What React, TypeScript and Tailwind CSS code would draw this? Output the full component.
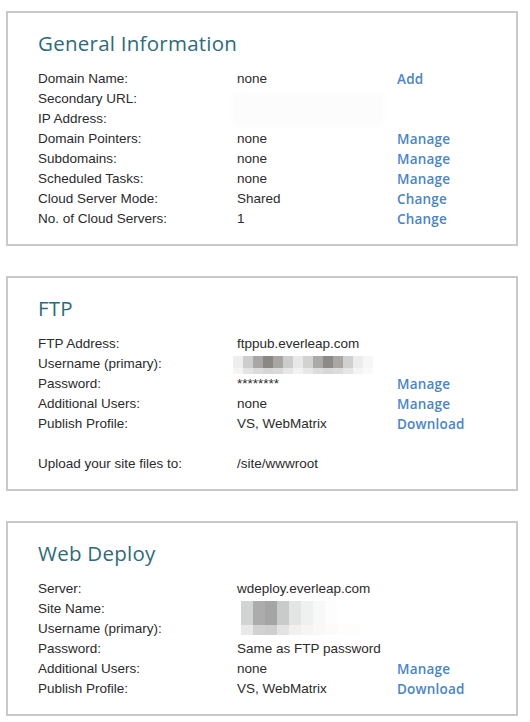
import React from "react";

type Row = {
  label: string;
  value?: string;
  link?: string;
  blank?: boolean;
  mosaic?: "ftp" | "deploy" | "faint";
};

const FtpCells = [
  "#eeeeee", "#cdcdcd", "#a9a7a5", "#8b8782", "#a8a5a2", "#cccccc", "#e8e8e8",
  "#d2d2d2", "#acaaa8", "#8d8986", "#a9a6a3", "#d0d0d0", "#ececec", "#f6f6f6",
];
const FtpCells2 = [
  "#f4f4f4", "#e4e4e4", "#dcdcdc", "#d6d6d6", "#dadada", "#e6e6e6", "#f2f2f2",
  "#e8e8e8", "#dddddd", "#d8d8d8", "#dcdcdc", "#e6e6e6", "#f4f4f4", "#fafafa",
];
const DeployTop = ["#d2d3d3", "#acacac", "#a5a5a5", "#c9caca", "#e3e5e5", "#eff1f1", "#f8f8f8", "#fdfdfd", "#ffffff", "#ffffff", "#ffffff"];
const DeployBottom = ["#e9e9e9", "#d2d2d2", "#cecece", "#e3e3e3", "#f2f0ee", "#f7f5f3", "#fbf9f8", "#fdfbfa", "#fefdfc", "#fefdfc", "#ffffff"];

// pixelated blur over the hidden account values
const Mosaic = ({ kind }: { kind: "ftp" | "deploy" | "faint" }) => {
  if (kind === "ftp") {
    return (
      <div className="absolute left-[-4px] top-[2px] flex flex-col">
        <div className="flex">
          {FtpCells.map((c, i) => (
            <div key={i} className="w-[10px] h-[12px]" style={{ background: c }} />
          ))}
        </div>
        <div className="flex">
          {FtpCells2.map((c, i) => (
            <div key={i} className="w-[10px] h-[6px]" style={{ background: c }} />
          ))}
        </div>
      </div>
    );
  }
  if (kind === "deploy") {
    return (
      <div className="absolute left-[4px] top-[2px] flex flex-col">
        <div className="flex">
          {DeployTop.map((c, i) => (
            <div key={i} className="w-[12px] h-[24px]" style={{ background: c }} />
          ))}
        </div>
        <div className="flex">
          {DeployBottom.map((c, i) => (
            <div key={i} className="w-[12px] h-[10px]" style={{ background: c }} />
          ))}
        </div>
      </div>
    );
  }
  return (
    <div className="absolute left-[-4px] top-[4px] w-[150px] h-[34px] bg-[#fcfcfc] blur-[2px]" />
  );
};

const Card = ({ title, rows }: { title: string; rows: Row[] }) => (
  <div className="border-2 border-[#c9c9c7] bg-white pt-[16px] pb-[15px] pl-[30px] pr-4">
    <h2 className="font-['Open_Sans',sans-serif] font-medium text-[20.5px] leading-[28px] text-[#2f6b79] tracking-[0.25px] mb-[12px]">
      {title}
    </h2>
    <div className="flex flex-col font-['Liberation_Sans',Arial,sans-serif] text-[13.5px] leading-[20px] text-[#2b2b2b]">
      {rows.map((r, i) =>
        r.blank ? (
          <div key={i} className="h-[20px]" />
        ) : (
          <div key={i} className="flex h-[20px] items-center">
            <div className="w-[199px] shrink-0">{r.label}</div>
            <div className="w-[160px] shrink-0 relative self-stretch flex items-center">
              {r.mosaic && <Mosaic kind={r.mosaic} />}
              <span className="relative">{r.value}</span>
            </div>
            {r.link && (
              <a className="font-['Open_Sans',sans-serif] font-semibold text-[13.5px] text-[#4a85c5] tracking-[0.2px] cursor-pointer">
                {r.link}
              </a>
            )}
          </div>
        )
      )}
    </div>
  </div>
);

export default function App() {
  return (
    <div className="w-[530px] min-h-[722px] bg-white pt-[11px] pl-[6px] pr-[12px] flex flex-col gap-[30px]">
      <Card
        title="General Information"
        rows={[
          { label: "Domain Name:", value: "none", link: "Add" },
          { label: "Secondary URL:", mosaic: "faint" },
          { label: "IP Address:" },
          { label: "Domain Pointers:", value: "none", link: "Manage" },
          { label: "Subdomains:", value: "none", link: "Manage" },
          { label: "Scheduled Tasks:", value: "none", link: "Manage" },
          { label: "Cloud Server Mode:", value: "Shared", link: "Change" },
          { label: "No. of Cloud Servers:", value: "1", link: "Change" },
        ]}
      />
      <Card
        title="FTP"
        rows={[
          { label: "FTP Address:", value: "ftppub.everleap.com" },
          { label: "Username (primary):", mosaic: "ftp" },
          { label: "Password:", value: "********", link: "Manage" },
          { label: "Additional Users:", value: "none", link: "Manage" },
          { label: "Publish Profile:", value: "VS, WebMatrix", link: "Download" },
          { label: "", blank: true },
          { label: "Upload your site files to:", value: "/site/wwwroot" },
        ]}
      />
      <Card
        title="Web Deploy"
        rows={[
          { label: "Server:", value: "wdeploy.everleap.com" },
          { label: "Site Name:", mosaic: "deploy" },
          { label: "Username (primary):" },
          { label: "Password:", value: "Same as FTP password" },
          { label: "Additional Users:", value: "none", link: "Manage" },
          { label: "Publish Profile:", value: "VS, WebMatrix", link: "Download" },
        ]}
      />
    </div>
  );
}
